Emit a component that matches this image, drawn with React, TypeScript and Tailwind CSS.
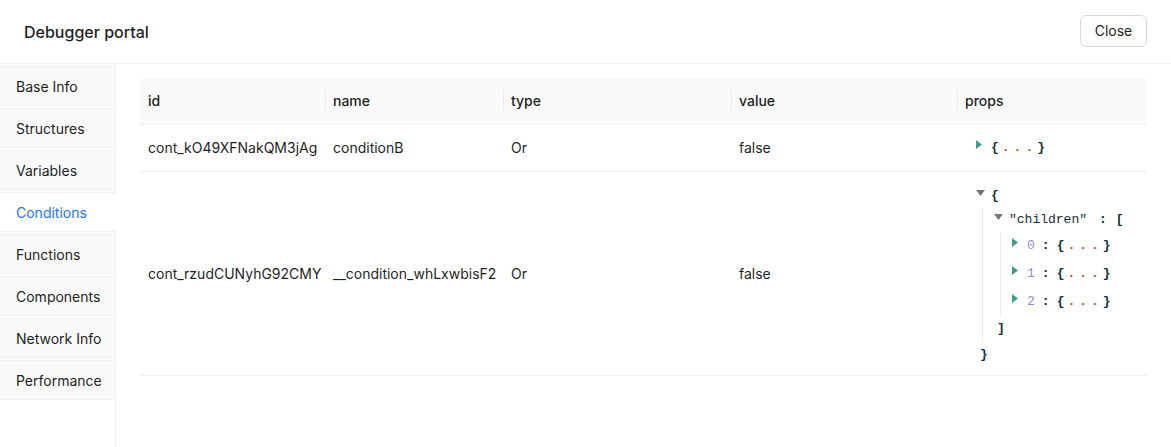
import React from "react";

const tabs = [
  "Base Info",
  "Structures",
  "Variables",
  "Conditions",
  "Functions",
  "Components",
  "Network Info",
  "Performance",
];

const cols = [
  { key: "id", w: "w-[185px]" },
  { key: "name", w: "w-[178px]" },
  { key: "type", w: "w-[228px]" },
  { key: "value", w: "w-[226px]" },
  { key: "props", w: "w-[190px]" },
];

function Arrow({ open }: { open?: boolean }) {
  return (
    <span className="inline-flex w-[15px] shrink-0 items-center">
      {open ? (
        <svg width="9" height="6" viewBox="0 0 9 6" className="-mt-[6px]">
          <path d="M0 0h9L4.5 6z" fill="#777" />
        </svg>
      ) : (
        <svg width="6" height="9" viewBox="0 0 6 9" className="-mt-[6px]">
          <path d="M0 0l6 4.5L0 9z" fill="#3d9c8c" />
        </svg>
      )}
    </span>
  );
}

function Collapsed() {
  return (
    <span className="font-bold text-[#0b2f3a]">
      {"{"}
      <span className="tracking-[4px] pl-[3px] text-[#cb4b16]">...</span>
      {"}"}
    </span>
  );
}

function Item({ idx }: { idx: number }) {
  return (
    <div className="flex h-[28px] items-center">
      <Arrow />
      <span className="text-[#8e8ec9]">{idx}</span>
      <span className="px-[7px] font-bold text-[#0b2f3a]">:</span>
      <Collapsed />
    </div>
  );
}

function JsonTree() {
  return (
    <div className="font-['Liberation_Mono',monospace] text-[13px] leading-none">
      <div className="flex h-[24px] items-center">
        <Arrow open />
        <span className="font-bold text-[#0b2f3a]">{"{"}</span>
      </div>
      <div className="ml-[6px] border-l border-[#ececec] pl-[11px]">
        <div className="flex h-[24px] items-center">
          <Arrow open />
          <span className="text-[#0b2f3a]">"children"</span>
          <span className="pl-[12px] pr-[9px] font-bold text-[#0b2f3a]">:</span>
          <span className="font-bold text-[#0b2f3a]">[</span>
        </div>
        <div className="ml-[6px] border-l border-[#ececec] pl-[11px]">
          <Item idx={0} />
          <Item idx={1} />
          <Item idx={2} />
        </div>
        <div className="flex h-[26px] items-center pl-[3px] font-bold text-[#0b2f3a]">]</div>
      </div>
      <div className="flex h-[26px] items-center pl-[4px] font-bold text-[#0b2f3a]">{"}"}</div>
    </div>
  );
}

export default function App() {
  return (
    <div className="flex h-[447px] w-full flex-col bg-white font-['Inter','Liberation_Sans',sans-serif] text-[14px] text-[#1f1f1f]">
      <div className="flex h-[64px] shrink-0 items-center justify-between border-b border-[#f0f0f0] px-6">
        <div className="text-[16px] font-medium">Debugger portal</div>
        <button
          type="button"
          className="-mt-[2px] h-[32px] w-[67px] rounded-md border border-[#d9d9d9] bg-white text-[14px]"
        >
          Close
        </button>
      </div>

      <div className="flex min-h-0 flex-1">
        <div className="flex w-[116px] shrink-0 flex-col gap-[2px] border-r border-[#f0f0f0] pt-[2px]">
          {tabs.map((t) => {
            const active = t === "Conditions";
            return (
              <div
                key={t}
                className={
                  active
                    ? "-ml-px -mr-px flex h-[40px] items-center border-y border-l border-[#f0f0f0] bg-white pl-4 text-[#1677ff]"
                    : "-ml-px flex h-[40px] items-center border border-r-0 border-[#f0f0f0] bg-[#fafafa] pl-4"
                }
              >
                {t}
              </div>
            );
          })}
        </div>

        <div className="flex-1 pl-6 pr-6 pt-[14px]">
          <table className="w-[1007px] table-fixed border-collapse">
            <thead>
              <tr className="h-[46px] bg-[#fafafa]">
                {cols.map((c, i) => (
                  <th
                    key={c.key}
                    className={`${c.w} relative border-b border-[#f0f0f0] px-2 text-left font-medium`}
                  >
                    {i > 0 && (
                      <span className="absolute left-0 top-[11px] h-[22px] w-px bg-[#ececec]" />
                    )}
                    {c.key}
                  </th>
                ))}
              </tr>
            </thead>
            <tbody>
              <tr className="h-[47px] border-b border-[#f0f0f0]">
                <td className="px-2">cont_kO49XFNakQM3jAg</td>
                <td className="px-2">conditionB</td>
                <td className="px-2">Or</td>
                <td className="px-2">false</td>
                <td className="pl-[19px]">
                  <div className="flex items-center font-['Liberation_Mono',monospace] text-[13px] leading-none">
                    <Arrow />
                    <Collapsed />
                  </div>
                </td>
              </tr>
              <tr className="border-b border-[#f0f0f0]">
                <td className="px-2">cont_rzudCUNyhG92CMY</td>
                <td className="whitespace-nowrap px-2">__condition_whLxwbisF2</td>
                <td className="px-2">Or</td>
                <td className="px-2">false</td>
                <td className="pb-[7px] pl-[19px] pt-3">
                  <JsonTree />
                </td>
              </tr>
            </tbody>
          </table>
        </div>
      </div>
    </div>
  );
}
